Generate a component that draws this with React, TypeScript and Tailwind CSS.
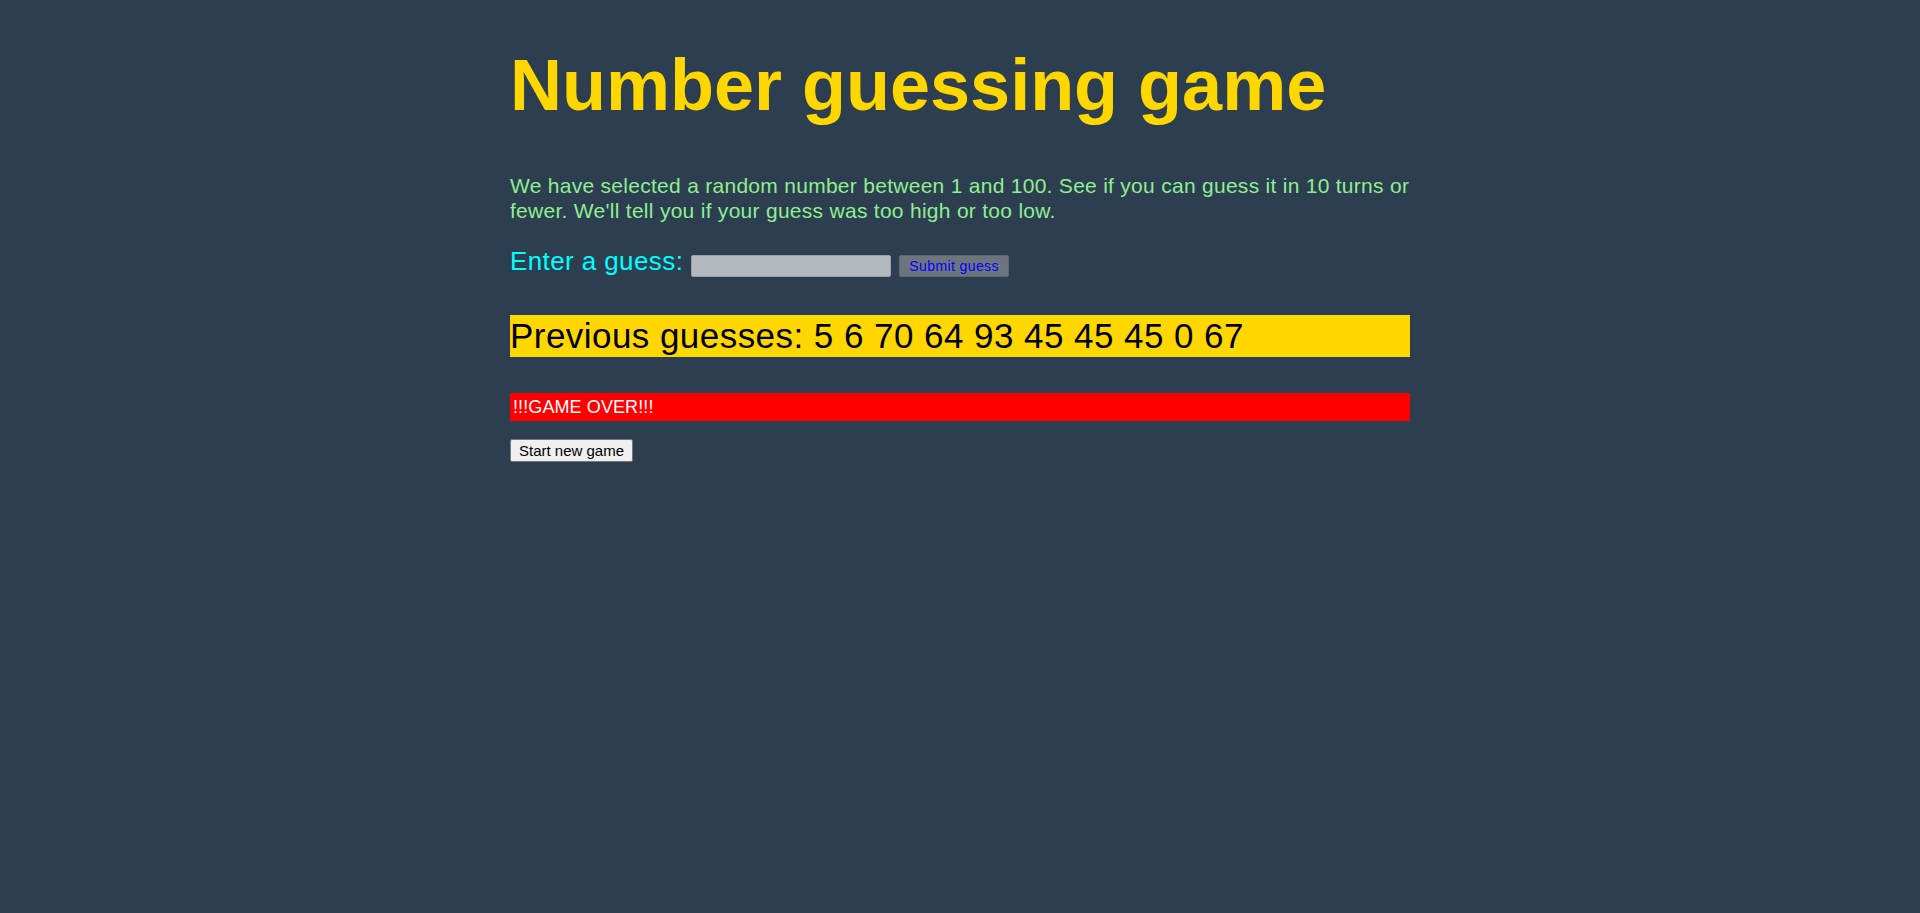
import React from "react";

export default function App() {
  return (
    <div className="min-h-[913px] w-full bg-[#2c3e50] font-['Liberation_Sans',Arial,sans-serif]">
      <div className="mx-auto w-[900px] pt-[42px]">
        <h1 className="m-0 text-[72px] font-bold leading-[86px] text-[#ffd700]">
          Number guessing game
        </h1>
        <p className="mt-[45px] text-[21px] leading-[25px] tracking-[0.28px] text-[#90ee90]">
          We have selected a random number between 1 and 100. See if you can guess it in 10 turns or
          fewer. We'll tell you if your guess was too high or too low.
        </p>
        <div className="mt-[24px] flex items-start">
          <label className="text-[26px] leading-[29px] tracking-[0.4px] text-[#00ffff]">Enter a guess:</label>
          <input
            type="text"
            className="ml-[8px] mt-[8px] h-[22px] w-[200px] rounded-[2px] border border-[#9aa0a8] bg-[#b4b9c0] outline-none"
          />
          <button className="ml-[8px] mt-[8px] h-[22px] rounded-[2px] border border-[#5e6670] bg-[#6c757d] px-[9px] text-[14px] leading-[18px] tracking-[0.4px] text-[#0000ff]">
            Submit guess
          </button>
        </div>
        <div className="mt-[38px] h-[42px] bg-[#ffd700] text-[35px] leading-[42px] tracking-[0.45px] text-black">
          Previous guesses: 5 6 70 64 93 45 45 45 0 67
        </div>
        <div className="mt-[36px] h-[28px] bg-[#ff0000] px-[3px] text-[18px] leading-[28px] tracking-[0.1px] text-white">
          !!!GAME OVER!!!
        </div>
        <button className="mt-[18px] h-[23px] rounded-[2px] border border-[#767676] bg-[#efefef] px-[8px] text-[15px] leading-[17px] text-black">
          Start new game
        </button>
      </div>
    </div>
  );
}
